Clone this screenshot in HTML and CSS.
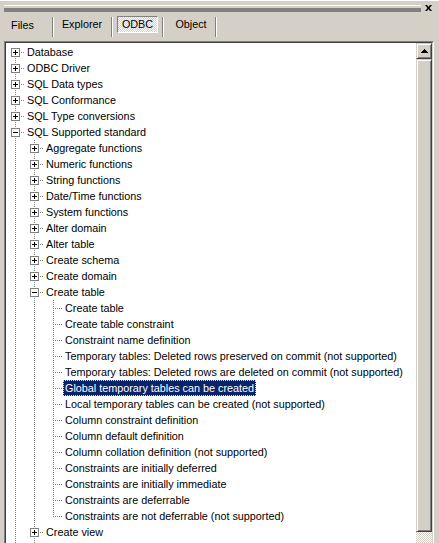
FILE: index.html
```html
<!DOCTYPE html>
<html>
<head>
<meta charset="utf-8">
<link rel="stylesheet" href="styles.css">
</head>
<body>
<div class="panel">
  <div class="titlebar">
    <div class="grip"></div>
    <svg class="close" width="7" height="6" viewBox="0 0 7 6"><path d="M0 0h2l1.5 2 1.5-2h2l-2.5 3 2.5 3h-2l-1.5-2-1.5 2h-2l2.5-3z" fill="#000"/></svg>
  </div>
  <div class="tabs">
    <div class="tab t-files">Files</div>
    <div class="sep"></div>
    <div class="tab t-explorer">Explorer</div>
    <div class="sep"></div>
    <div class="tab t-odbc active">ODBC</div>
    <div class="sep"></div>
    <div class="tab t-object">Object</div>
    <div class="sep"></div>
  </div>
  <div class="tree">
    <div class="tree-inner">
      <div class="tree-content">
        <div class="row"><span class="g first"><span class="exp plus"></span></span><span class="label">Database</span></div>
        <div class="row"><span class="g tee"><span class="exp plus"></span></span><span class="label">ODBC Driver</span></div>
        <div class="row"><span class="g tee"><span class="exp plus"></span></span><span class="label">SQL Data types</span></div>
        <div class="row"><span class="g tee"><span class="exp plus"></span></span><span class="label">SQL Conformance</span></div>
        <div class="row"><span class="g tee"><span class="exp plus"></span></span><span class="label">SQL Type conversions</span></div>
        <div class="row"><span class="g tee"><span class="exp minus"></span></span><span class="label">SQL Supported standard</span></div>
        <div class="row"><span class="g pipe"></span><span class="g tee"><span class="exp plus"></span></span><span class="label">Aggregate functions</span></div>
        <div class="row"><span class="g pipe"></span><span class="g tee"><span class="exp plus"></span></span><span class="label">Numeric functions</span></div>
        <div class="row"><span class="g pipe"></span><span class="g tee"><span class="exp plus"></span></span><span class="label">String functions</span></div>
        <div class="row"><span class="g pipe"></span><span class="g tee"><span class="exp plus"></span></span><span class="label">Date/Time functions</span></div>
        <div class="row"><span class="g pipe"></span><span class="g tee"><span class="exp plus"></span></span><span class="label">System functions</span></div>
        <div class="row"><span class="g pipe"></span><span class="g tee"><span class="exp plus"></span></span><span class="label">Alter domain</span></div>
        <div class="row"><span class="g pipe"></span><span class="g tee"><span class="exp plus"></span></span><span class="label">Alter table</span></div>
        <div class="row"><span class="g pipe"></span><span class="g tee"><span class="exp plus"></span></span><span class="label">Create schema</span></div>
        <div class="row"><span class="g pipe"></span><span class="g tee"><span class="exp plus"></span></span><span class="label">Create domain</span></div>
        <div class="row"><span class="g pipe"></span><span class="g tee"><span class="exp minus"></span></span><span class="label">Create table</span></div>
        <div class="row"><span class="g pipe"></span><span class="g pipe"></span><span class="g tee"></span><span class="label">Create table</span></div>
        <div class="row"><span class="g pipe"></span><span class="g pipe"></span><span class="g tee"></span><span class="label">Create table constraint</span></div>
        <div class="row"><span class="g pipe"></span><span class="g pipe"></span><span class="g tee"></span><span class="label">Constraint name definition</span></div>
        <div class="row"><span class="g pipe"></span><span class="g pipe"></span><span class="g tee"></span><span class="label">Temporary tables: Deleted rows preserved on commit (not supported)</span></div>
        <div class="row"><span class="g pipe"></span><span class="g pipe"></span><span class="g tee"></span><span class="label">Temporary tables: Deleted rows are deleted on commit (not supported)</span></div>
        <div class="row"><span class="g pipe"></span><span class="g pipe"></span><span class="g tee"></span><span class="label selected">Global temporary tables can be created</span></div>
        <div class="row"><span class="g pipe"></span><span class="g pipe"></span><span class="g tee"></span><span class="label">Local temporary tables can be created (not supported)</span></div>
        <div class="row"><span class="g pipe"></span><span class="g pipe"></span><span class="g tee"></span><span class="label">Column constraint definition</span></div>
        <div class="row"><span class="g pipe"></span><span class="g pipe"></span><span class="g tee"></span><span class="label">Column default definition</span></div>
        <div class="row"><span class="g pipe"></span><span class="g pipe"></span><span class="g tee"></span><span class="label">Column collation definition (not supported)</span></div>
        <div class="row"><span class="g pipe"></span><span class="g pipe"></span><span class="g tee"></span><span class="label">Constraints are initially deferred</span></div>
        <div class="row"><span class="g pipe"></span><span class="g pipe"></span><span class="g tee"></span><span class="label">Constraints are initially immediate</span></div>
        <div class="row"><span class="g pipe"></span><span class="g pipe"></span><span class="g tee"></span><span class="label">Constraints are deferrable</span></div>
        <div class="row"><span class="g pipe"></span><span class="g pipe"></span><span class="g elbow"></span><span class="label">Constraints are not deferrable (not supported)</span></div>
        <div class="row"><span class="g pipe"></span><span class="g tee"><span class="exp plus"></span></span><span class="label">Create view</span></div>
        <div class="row"><span class="g pipe"></span><span class="g pipe"></span></div>
      </div>
      <div class="vscroll">
        <div class="sb-btn"><svg width="7" height="4" viewBox="0 0 7 4"><path d="M3 0h1v1h1v1h1v1h1v1h-7v-1h1v-1h1v-1h1z" fill="#000"/></svg></div>
        <div class="sb-thumb"></div>
        <div class="sb-track"></div>
      </div>
    </div>
  </div>
</div>
</body>
</html>
```

FILE: styles.css
```css
html, body {
  margin: 0;
  padding: 0;
  height: 100%;
  overflow: hidden;
  background: #d4d0c8;
}

.panel {
  font-family: "Liberation Sans", Arial, sans-serif;
  font-size: 10.8px;
  color: #000;
  height: 543px;
  border-top: 1px solid #ffffff;
  box-sizing: border-box;
}

.titlebar {
  display: flex;
  align-items: center;
  height: 15px;
  padding: 0 7px 0 4px;
}

.grip {
  flex: 1;
  height: 2px;
  border-top: 1px solid #ffffff;
  border-bottom: 1px solid #808080;
  box-shadow: 0 3px 0 0 #808080, 0 2px 0 0 #ffffff;
  margin-right: 4px;
  margin-top: -3px;
}

.close {
  display: block;
  margin-top: -1px;
}

.tabs {
  display: flex;
  align-items: flex-start;
  height: 22px;
  padding-left: 4px;
}

.tab {
  height: 17px;
  line-height: 17px;
  margin-top: 1px;
  text-align: center;
  box-sizing: border-box;
}

.t-files { width: 37px; margin-right: 11px; }
.t-explorer { width: 52px; margin: 0 3px 0 2px; }
.t-odbc { width: 41px; margin: 0 4px 0 4px; }
.t-object { width: 46px; margin: 0 1px 0 4px; }

.tab.active {
  border: 1px solid;
  border-color: #808080 #ffffff #ffffff #808080;
  line-height: 15px;
  background: conic-gradient(#ffffff 25%, #d4d0c8 0 50%, #ffffff 0 75%, #d4d0c8 0) 0 0 / 2px 2px;
}

.sep {
  height: 20px;
  margin-top: 1px;
  border-left: 1px solid #808080;
  border-right: 1px solid #ffffff;
  box-sizing: content-box;
  width: 0;
}

.tree {
  margin: 3px 5px 0 4px;
  height: 530px;
  border: 1px solid;
  border-color: #808080 #ffffff #ffffff #808080;
}

.tree-inner {
  display: flex;
  height: 100%;
  box-sizing: border-box;
  border: 1px solid;
  border-color: #404040 #d4d0c8 #d4d0c8 #404040;
}

.tree-content {
  flex: 1;
  background: #ffffff;
  padding-top: 1px;
  overflow: hidden;
}

.row {
  display: flex;
  height: 16px;
  white-space: nowrap;
}

.g {
  flex: none;
  width: 19px;
  height: 16px;
  display: flex;
  align-items: flex-start;
}

.pipe {
  background: repeating-linear-gradient(to bottom, #808080 0 1px, transparent 1px 2px) 9px 0 / 1px 16px no-repeat;
}

.tee {
  background:
    repeating-linear-gradient(to bottom, #808080 0 1px, transparent 1px 2px) 9px 0 / 1px 16px no-repeat,
    repeating-linear-gradient(to right, #808080 0 1px, transparent 1px 2px) 11px 8px / 8px 1px no-repeat;
}

.first {
  background:
    repeating-linear-gradient(to bottom, #808080 0 1px, transparent 1px 2px) 9px 8px / 1px 8px no-repeat,
    repeating-linear-gradient(to right, #808080 0 1px, transparent 1px 2px) 11px 8px / 8px 1px no-repeat;
}

.elbow {
  background:
    repeating-linear-gradient(to bottom, #808080 0 1px, transparent 1px 2px) 9px 0 / 1px 9px no-repeat,
    repeating-linear-gradient(to right, #808080 0 1px, transparent 1px 2px) 11px 8px / 8px 1px no-repeat;
}

.exp {
  width: 9px;
  height: 9px;
  box-sizing: border-box;
  border: 1px solid #808080;
  margin: 4px 0 0 5px;
  background-color: #ffffff;
}

.exp.plus {
  background:
    linear-gradient(#000, #000) 1px 3px / 5px 1px no-repeat,
    linear-gradient(#000, #000) 3px 1px / 1px 5px no-repeat,
    #ffffff;
}

.exp.minus {
  background:
    linear-gradient(#000, #000) 1px 3px / 5px 1px no-repeat,
    #ffffff;
}

.label {
  display: block;
  height: 16px;
  line-height: 14px;
  padding: 0 1px;
  border: 1px solid transparent;
  box-sizing: border-box;
}

.label.selected {
  background: #0a246a;
  color: #ffffff;
  border: 1px dotted #e6e08c;
}

.vscroll {
  flex: none;
  width: 16px;
  display: flex;
  flex-direction: column;
}

.sb-btn,
.sb-thumb {
  box-sizing: border-box;
  background: #d4d0c8;
  border: 1px solid;
  border-color: #d4d0c8 #404040 #404040 #d4d0c8;
  box-shadow: inset 1px 1px 0 #ffffff, inset -1px -1px 0 #808080;
}

.sb-btn {
  height: 16px;
  display: flex;
  align-items: center;
  justify-content: center;
}

.sb-btn svg {
  display: block;
  margin-top: -1px;
}

.sb-thumb {
  height: 473px;
}

.sb-track {
  flex: 1;
  background: conic-gradient(#ffffff 25%, #d4d0c8 0 50%, #ffffff 0 75%, #d4d0c8 0) 0 0 / 2px 2px;
}
```
